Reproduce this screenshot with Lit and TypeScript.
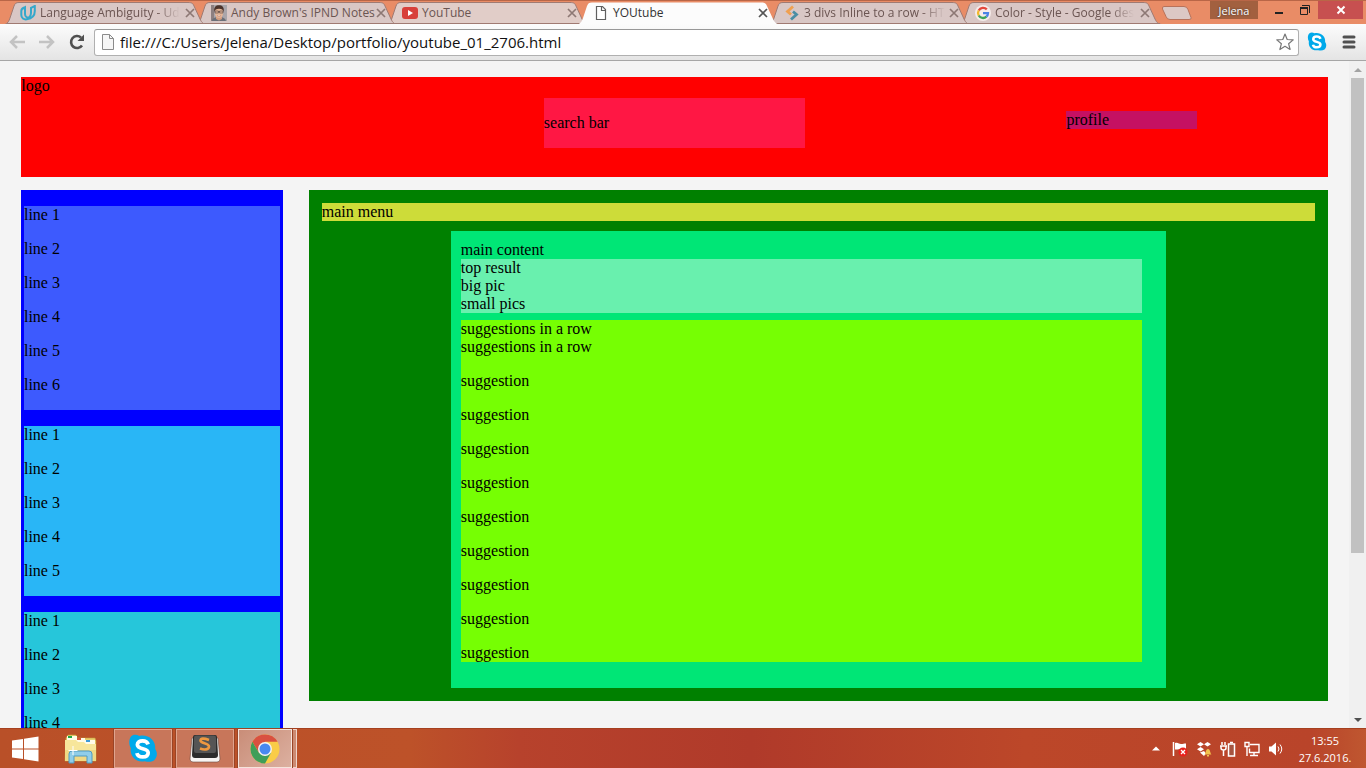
import { LitElement, html, css, svg } from "lit";
import { customElement, state } from "lit/decorators.js";
import { classMap } from "lit/directives/class-map.js";

interface Tab {
  title: string;
  icon: unknown;
  fade?: boolean;
}

const udacity = html`<svg viewBox="0 0 16 16"><path d="M1.500 4.500L5 2.300V9c0 3 2 4 4.500 3.300M5 2.300C2.500 3 1.300 4 1.300 6v4c0 3 2.500 4.800 5.500 4.300C11 13.700 14.800 11 14.800 6V1L11 2.800V8c0 2-.6 3.500-2 4.500" fill="none" stroke="#35a8cb" stroke-width="2"/></svg>`;

const portrait = html`<svg viewBox="0 0 16 16"><rect width="16" height="16" fill="#a9a5aa"/><rect width="3" height="16" fill="#8c7f80"/><path d="M1 16c0-3 3-4 7-4s6 1 7 4z" fill="#6b6f78"/><path d="M5 11h6v3l-3 1.500L5 14z" fill="#d09c80"/><ellipse cx="8" cy="7.500" rx="4.200" ry="5.500" fill="#e3b597"/><path d="M3.300 7C2.500 2 5 .3 8 .3S13.500 2 12.700 7C12 4.500 11 3.800 8 3.800S4 4.500 3.300 7z" fill="#4c332b"/><path d="M4 6h3.400v2H4zM8.600 6H12v2H8.600zM7.400 6.600h1.200" fill="none" stroke="#4a3b39" stroke-width=".6"/><path d="M6 10.500q2 1.500 4 0" fill="#fff" stroke="#a55a4c" stroke-width=".5"/></svg>`;

const youtube = html`<svg viewBox="0 0 16 16"><rect y="2" width="16" height="12" rx="3" fill="#d8403a"/><path d="M6 5l5 3-5 3z" fill="#fff"/></svg>`;

const page = html`<svg viewBox="0 0 16 16"><path d="M3.500 1.500h6l3 3v10h-9z" fill="#fff" stroke="#5f5f5f" stroke-width="1.200"/><path d="M8.500 1.500v4h4" fill="none" stroke="#5f5f5f" stroke-width="1.200"/></svg>`;

const codeMark = html`<svg viewBox="0 0 16 16"><path d="M9 1.500L3.500 6.500 7 9.500" fill="none" stroke="#f0a050" stroke-width="2.800"/><path d="M9 6.500l3.500 3L7 14.500" fill="none" stroke="#4a8ea4" stroke-width="2.800"/></svg>`;

const google = html`<svg viewBox="0 0 16 16"><circle cx="8" cy="8" r="8" fill="#f6ecea"/><g fill="none" stroke-width="2.300"><path d="M11.800 4.400A5 5 0 0 0 3.700 5.500" stroke="#e4483c"/><path d="M3.700 5.500a5 5 0 0 0 0 5" stroke="#f2b92c"/><path d="M3.700 10.500a5 5 0 0 0 7.700 1.200" stroke="#3da35a"/><path d="M11.400 11.700A5 5 0 0 0 13 8.200H8" stroke="#4b83e6"/></g></svg>`;

const skype = (size: number) => html`<svg width=${size} height=${size} viewBox="0 0 32 32"><path d="M3.500 2.500C6 .5 9 .5 12 2c9-2 18 4 17 14 3 4 2 9-1 12-3 2-7 2-10 1C9 31 1.500 24 3 15 .5 11 1 5 3.500 2.500z" fill="#00a9ea"/><path d="M21.500 11c-1-3-3.500-3.700-6-3.700-3 0-5.500 1.500-5.500 4.200 0 5.500 11.500 3 11.500 8.500 0 3-2.500 4.500-5.800 4.500-3 0-5.500-1-6.200-4.200" fill="none" stroke="#fff" stroke-width="4"/></svg>`;

@customElement("app-root")
export class AppRoot extends LitElement {
  @state() private active = 3;

  private tabs: Tab[] = [
    { title: "Language Ambiguity - Ud", icon: udacity, fade: true },
    { title: "Andy Brown's IPND Notes", icon: portrait },
    { title: "YouTube", icon: youtube },
    { title: "YOUtube", icon: page },
    { title: "3 divs Inline to a row - HT", icon: codeMark, fade: true },
    { title: "Color - Style - Google des", icon: google, fade: true },
  ];

  static styles = css`
    :host {
      display: flex;
      flex-direction: column;
      height: 100vh;
      overflow: hidden;
      font-family: "Open Sans", "Noto Sans", sans-serif;
      font-size: 12px;
      color: #000;
    }
    * {
      box-sizing: border-box;
    }
    button {
      border: 0;
      padding: 0;
      margin: 0;
      background: none;
      font: inherit;
      color: inherit;
      display: flex;
      align-items: center;
      justify-content: center;
    }
    svg {
      display: block;
    }

    .titlebar {
      flex: none;
      display: flex;
      height: 24px;
      padding-left: 5px;
      background: #e98c66;
      border-top: 1px solid #b96647;
    }
    .tabs {
      flex: 1;
      min-width: 0;
      display: flex;
      align-items: flex-end;
      isolation: isolate;
    }
    .tab {
      position: relative;
      flex: 0 1 202px;
      min-width: 0;
      height: 23px;
      margin-right: -11px;
      display: flex;
      align-items: center;
      padding: 0 11px 0 15px;
      color: #6b5552;
    }
    .shape {
      position: absolute;
      inset: 0;
      width: 100%;
      height: 100%;
      z-index: -1;
      fill: #d9c7c5;
      stroke: #a07a72;
    }
    .tab:nth-child(3) .shape {
      fill: #e1cdc8;
    }
    .tab.active .shape {
      fill: #fcfcfc;
      stroke: none;
    }
    .tab:nth-child(6) { z-index: 1; }
    .tab:nth-child(5) { z-index: 2; }
    .tab:nth-child(4) { z-index: 3; }
    .tab:nth-child(3) { z-index: 4; }
    .tab:nth-child(2) { z-index: 5; }
    .tab:nth-child(1) { z-index: 6; }
    .tab.tab.active {
      z-index: 10;
      color: #333;
    }
    .pick {
      flex: 1;
      min-width: 0;
      justify-content: flex-start;
      gap: 4px;
      height: 100%;
    }
    .favicon {
      flex: none;
      width: 16px;
      height: 16px;
    }
    .title {
      flex: none;
      white-space: nowrap;
      line-height: 18px;
    }
    .fade {
      mask-image: linear-gradient(to right, #000 calc(100% - 24px), transparent);
    }
    .close {
      flex: none;
      width: 12px;
      height: 16px;
      color: #8d7874;
    }
    .active .close {
      color: #555;
    }
    .newtab {
      flex: none;
      align-self: center;
      margin-left: 10px;
      width: 32px;
      height: 16px;
    }
    .window {
      flex: none;
      display: flex;
      align-items: flex-start;
      padding-right: 3px;
    }
    .user {
      width: 48px;
      height: 18px;
      margin-right: 8px;
      background: #a2603f;
      color: #fff;
      font-size: 11px;
      text-shadow: 0 0 2px #333;
    }
    .ctl {
      width: 26px;
      height: 18px;
    }
    .quit {
      width: 45px;
      background: #c75050;
    }

    .toolbar {
      flex: none;
      display: flex;
      align-items: center;
      gap: 8px;
      height: 37px;
      padding: 0 8px;
      background: linear-gradient(#fcfcfc, #e4e4e4);
      border-bottom: 1px solid #a6a6a6;
    }
    .nav {
      display: flex;
      gap: 12px;
    }
    .nav button {
      width: 18px;
      height: 18px;
    }
    .address {
      flex: 1;
      display: flex;
      align-items: center;
      gap: 4px;
      height: 27px;
      padding: 0 4px 0 5px;
      background: #fff;
      border: 1px solid #b0b0b0;
      border-top-color: #989898;
      border-radius: 3px;
    }
    .address input {
      flex: 1;
      min-width: 0;
      height: 24px;
      border: 0;
      padding: 0;
      outline: 0;
      background: none;
      font: 15px/24px "Open Sans", "Noto Sans", sans-serif;
      color: #111;
    }
    .more {
      width: 14px;
      margin: 0 2px 0 7px;
    }

    .viewport {
      flex: 1;
      min-height: 0;
      display: flex;
      background: #f4f4f4;
    }
    .site {
      flex: 1;
      min-width: 0;
      overflow: hidden;
      padding: 16px 8px 0;
      font: 16px/18px "Liberation Serif", "Times New Roman", serif;
    }
    .header {
      display: grid;
      grid-template-columns: 40% 20% 20% 10%;
      align-items: start;
      height: 100px;
      margin: 0 1%;
      background: #f00;
    }
    .search {
      margin-top: 21px;
      padding: 16px 0;
      background: #ff1744;
    }
    .profile {
      grid-column: 4;
      margin-top: 34px;
      background: #c51162;
    }
    .columns {
      display: grid;
      grid-template-columns: 20% 78%;
      justify-content: space-between;
      align-items: start;
      margin: 13px 1% 0;
    }
    .side {
      display: flex;
      flex-direction: column;
      gap: 16px;
      padding: 16px 1%;
      background: #00f;
    }
    .group p,
    .suggestions p {
      margin: 0;
    }
    .group p {
      padding-bottom: 16px;
    }
    .indigo { background: #3d5afe; }
    .sky { background: #29b6f6; }
    .teal { background: #26c6da; }
    .main {
      padding: 13px;
      background: #008000;
    }
    .menu {
      background: #cddc39;
    }
    .content {
      width: 72%;
      margin: 10px 0 0 13%;
      padding: 10px 10px 26px;
      background: #00e676;
    }
    .top,
    .suggestions {
      width: 98%;
    }
    .top {
      background: #69f0ae;
    }
    .suggestions {
      margin-top: 7px;
      background: #76ff03;
    }
    .suggestions p {
      padding-top: 16px;
    }

    .scroll {
      flex: none;
      display: flex;
      flex-direction: column;
      align-items: center;
      width: 17px;
      background: #f0f0f0;
    }
    .scroll button {
      flex: none;
      width: 17px;
      height: 17px;
    }
    .track {
      flex: 1;
      width: 13px;
    }
    .thumb {
      height: 75%;
      background: #c1c1c1;
    }

    .taskbar {
      flex: none;
      display: flex;
      align-items: stretch;
      height: 40px;
      background: linear-gradient(to right, #b95028, #bd5229 30%, #b7422c 38%, #b03a2a 55%, #bc4729 75%, #b9442a 96%, #bf5730);
      border-top: 1px solid #a5401f;
      color: #fff;
    }
    .start {
      width: 50px;
    }
    .files {
      width: 62px;
    }
    .apps {
      flex: 1;
      display: flex;
      gap: 4px;
      padding-left: 2px;
    }
    .app {
      width: 58px;
      background: #c8765a;
      border: 1px solid #e0a48e;
      outline: 1px solid #9a4426;
    }
    .app.current {
      width: 54px;
      background: linear-gradient(135deg, #c98d78, #dcb0a0);
      border-color: #f5e4dd;
    }
    .stack {
      width: 4px;
      margin-left: -3px;
      background: #cc8a72;
      border: 1px solid #f0d4ca;
      border-left: 0;
    }
    .tray {
      display: flex;
      align-items: center;
      gap: 8px;
    }
    .tray button {
      width: 16px;
      height: 16px;
    }
    .clock {
      display: flex;
      flex-direction: column;
      justify-content: center;
      width: 82px;
      text-align: center;
      font-size: 11px;
      line-height: 17px;
    }
  `;

  private renderTab(tab: Tab, i: number) {
    const on = i === this.active;
    return html`<div class=${classMap({ tab: true, active: on })}>
      <svg class="shape" viewBox="0 0 202 23" preserveAspectRatio="none">
        <path d="M0 23.500C3 22 4 20 5 17L9 5C10 2.500 11 1.500 14 1.500H183C187 1.500 188 2.500 189 5L195 18C197 22 198 23 202 23.500" />
        ${on ? null : svg`<path d="M2 22.500H200" />`}
      </svg>
      <button class="pick" @click=${() => (this.active = i)}>
        <span class="favicon">${tab.icon}</span>
        <span class=${classMap({ title: true, fade: !!tab.fade })}>${tab.title}</span>
      </button>
      <button class="close" aria-label="Close tab">
        <svg width="10" height="10" viewBox="0 0 10 10"><path d="M1 1l8 8M9 1l-8 8" stroke="currentColor" stroke-width="1.700" /></svg>
      </button>
    </div>`;
  }

  private lines(count: number, word: string) {
    return Array.from({ length: count }, (_, i) => html`<p>${word} ${i + 1}</p>`);
  }

  render() {
    return html`
      <div class="titlebar">
        <div class="tabs">
          ${this.tabs.map((t, i) => this.renderTab(t, i))}
          <button class="newtab" aria-label="New tab">
            <svg width="32" height="16" viewBox="0 0 32 16"><path d="M3 1.500H23q3 0 4 3l3 8q1 2-2 2H9q-3 0-4-3L1.500 4Q1 1.500 3 1.500z" fill="#dcc8c4" stroke="#b8725a" /></svg>
          </button>
        </div>
        <div class="window">
          <button class="user">Jelena</button>
          <button class="ctl" aria-label="Minimize"><svg width="10" height="12" viewBox="0 0 10 12"><path d="M1 9h8" stroke="#222" stroke-width="2" /></svg></button>
          <button class="ctl" aria-label="Restore"><svg width="12" height="12" viewBox="0 0 12 12"><path d="M3 1.500h7.500V9M1.500 3v7.500h7V3.500h-7" fill="none" stroke="#222" /><path d="M1 4h8" stroke="#222" stroke-width="2" /></svg></button>
          <button class="ctl quit" aria-label="Close"><svg width="10" height="10" viewBox="0 0 10 10"><path d="M1.500 1.500l7 7M8.500 1.500l-7 7" stroke="#fff" stroke-width="2" /></svg></button>
        </div>
      </div>

      <div class="toolbar">
        <div class="nav">
          <button aria-label="Back"><svg width="18" height="18" viewBox="0 0 18 18"><path d="M17 9H3M9 3L3 9l6 6" fill="none" stroke="#c3c3c3" stroke-width="2.500" /></svg></button>
          <button aria-label="Forward"><svg width="18" height="18" viewBox="0 0 18 18"><path d="M1 9h14M9 3l6 6-6 6" fill="none" stroke="#c3c3c3" stroke-width="2.500" /></svg></button>
          <button aria-label="Reload"><svg width="18" height="18" viewBox="0 0 18 18"><path d="M14 12.500A6 6 0 1 1 13 4.500" fill="none" stroke="#505050" stroke-width="2.600" /><path d="M16 1.500V8H9.500z" fill="#505050" /></svg></button>
        </div>
        <div class="address">
          <svg width="16" height="18" viewBox="0 0 16 18"><path d="M2.500 1.500h7l4 4v11h-11z" fill="#f6f6f6" stroke="#8b8b8b" /><path d="M9.500 1.500v4h4" fill="none" stroke="#8b8b8b" /></svg>
          <input aria-label="Address" value="file:///C:/Users/Jelena/Desktop/portfolio/youtube_01_2706.html" />
          <button aria-label="Bookmark this page"><svg width="18" height="18" viewBox="0 0 18 18"><path d="M9 1l2.200 5.500 6 .4-4.600 3.800 1.500 5.800L9 13.300l-5.100 3.200 1.500-5.800L.8 6.900l6-.4z" fill="#fff" stroke="#777" stroke-width="1.200" stroke-linejoin="round" /></svg></button>
        </div>
        <button aria-label="Skype">${skype(20)}</button>
        <button class="more" aria-label="Menu"><svg width="14" height="14" viewBox="0 0 14 14"><path d="M2 2h10M2 7h10M2 12h10" stroke="#505050" stroke-width="3" stroke-linecap="round" /></svg></button>
      </div>

      <div class="viewport">
        <div class="site">
          <header class="header">
            <div>logo</div>
            <div class="search">search bar</div>
            <div class="profile">profile</div>
          </header>
          <div class="columns">
            <aside class="side">
              <div class="group indigo">${this.lines(6, "line")}</div>
              <div class="group sky">${this.lines(5, "line")}</div>
              <div class="group teal">${this.lines(4, "line")}</div>
            </aside>
            <main class="main">
              <div class="menu">main menu</div>
              <div class="content">
                <div>main content</div>
                <div class="top">
                  <div>top result</div>
                  <div>big pic</div>
                  <div>small pics</div>
                </div>
                <div class="suggestions">
                  <div>suggestions in a row</div>
                  <div>suggestions in a row</div>
                  ${Array.from({ length: 9 }, () => html`<p>suggestion</p>`)}
                </div>
              </div>
            </main>
          </div>
        </div>
        <div class="scroll">
          <button aria-label="Scroll up"><svg width="8" height="4" viewBox="0 0 8 4"><path d="M0 4l4-4 4 4z" fill="#a3a3a3" /></svg></button>
          <div class="track"><div class="thumb"></div></div>
          <button aria-label="Scroll down"><svg width="8" height="4" viewBox="0 0 8 4"><path d="M0 0l4 4 4-4z" fill="#505050" /></svg></button>
        </div>
      </div>

      <footer class="taskbar">
        <button class="start" aria-label="Start"><svg width="28" height="26" viewBox="0 0 28 26"><path d="M1 4.500L12 3v9.500H1zM13 2.800L27.500.5v12H13zM1 13.500h11V23L1 21.500zM13 13.500h14.500v12L13 23.200z" fill="#fff" /></svg></button>
        <button class="files" aria-label="File Explorer"><svg width="34" height="30" viewBox="0 0 34 30">
          <path d="M2 4l2-3h8l1 3h18l1 3v20H1z" fill="#e8cf6e" stroke="#c29e3e" stroke-width=".6" />
          <path d="M3 2h10v4H3zM11 4h10v4H11zM19 6h12v4H19z" fill="#fffbe8" />
          <path d="M4 2h4v2H4z" fill="#22a646" /><path d="M13 4h4v2h-4z" fill="#d7533a" /><path d="M22 6h4v2h-4z" fill="#3b9ad8" />
          <path d="M1 6h11l2 2h6l2 2h10v17H1z" fill="#f7e69b" /><path d="M1 16h31v11H1z" fill="#edd27a" opacity=".7" />
          <path d="M5 29V20q0-3 3-3h17q3 0 3 3v9h-5v-7H10v7z" fill="#90cde9" stroke="#4f9ac1" />
          <path d="M9 12v9M4.500 16.500h9" stroke="#fff" />
        </svg></button>
        <div class="apps">
          <button class="app" aria-label="Skype">${skype(30)}</button>
          <button class="app" aria-label="Sublime Text"><svg width="32" height="30" viewBox="0 0 32 30">
            <path d="M3 4L1 25q0 3 3 3h24q3 0 3-3L29 4z" fill="#f7f5f3" stroke="#6b4a40" stroke-width=".6" />
            <path d="M6 1h20q2 0 2 2l1 18q0 3-3 3H6q-3 0-3-3L4 3q0-2 2-2z" fill="#2c2c2c" />
            <path d="M7 1.500h18q2 0 2 2V17q0 2-2 2H7q-2 0-2-2V3.500q0-2 2-2z" fill="#555" />
            <path d="M20 6q-8-3-8.500.5c0 3 8.500 2.500 8.500 6 0 3.500-5 3.500-9 2" fill="none" stroke="#ee9840" stroke-width="2.600" />
          </svg></button>
          <button class="app current" aria-label="Google Chrome"><svg width="30" height="30" viewBox="0 0 30 30">
            <circle cx="15" cy="15" r="14.500" fill="#f9cc47" />
            <path d="M2.400 7.800A14.500 14.500 0 0 1 27.600 7.800H15L8.800 18.600z" fill="#d95040" />
            <path d="M2.400 7.800A14.500 14.500 0 0 0 15 29.500L21.200 18.600 15 22 8.800 18.600z" fill="#3f9e58" />
            <circle cx="15" cy="15" r="7" fill="#f4f1ef" /><circle cx="15" cy="15" r="5.500" fill="#4888ef" />
          </svg></button>
          <span class="stack"></span>
        </div>
        <div class="tray">
          <button aria-label="Show hidden icons"><svg width="8" height="5" viewBox="0 0 8 5"><path d="M0 4.500l4-4 4 4z" fill="#fff" /></svg></button>
          <button aria-label="Action Center"><svg width="16" height="16" viewBox="0 0 16 16"><path d="M1.500 1v14" stroke="#fff" stroke-width="1.500" /><path d="M3 2c3-1 4 1 6 1s3-.5 5-.5v6c-3 1-4-1-6-.5s-3 .5-5 .5z" fill="#fff" /><circle cx="11" cy="11" r="4.500" fill="#e8221c" /><path d="M9 9l4 4M13 9l-4 4" stroke="#fff" stroke-width="1.300" /></svg></button>
          <button aria-label="Dropbox"><svg width="16" height="16" viewBox="0 0 16 16"><path d="M4.500 1L8 3.300 4.500 5.600 1 3.300zM11.500 1L15 3.300l-3.500 2.300L8 3.300zM4.500 6L8 8.300l-3.500 2.300L1 8.300zM4 11.500L8 10l2 2.500L8 15z" fill="#fff" /><path d="M8.500 13.500c1.500-1 1-5.500 3.500-5.500s2 4.500 3.500 5.500zM11 14h2v1.500h-2z" fill="#f2c34c" /></svg></button>
          <button aria-label="Battery"><svg width="16" height="16" viewBox="0 0 16 16"><path d="M2 1v3M5 1v3M0 5h7M1 5v2q0 2 2.500 2T6 7V5M3.500 9v6" fill="none" stroke="#fff" stroke-width="1.500" /><path d="M8.500 3h6v12h-6z" fill="#a55440" stroke="#fff" stroke-width="1.500" /><path d="M10 1.500h3" stroke="#fff" stroke-width="1.500" /></svg></button>
          <button aria-label="Network"><svg width="16" height="16" viewBox="0 0 16 16"><path d="M6 3.500h9v8H5.500v-4M10 12v2.500M6 14.500h8M1 1.500h4v4H1zM3 6v9" fill="none" stroke="#fff" stroke-width="1.400" /></svg></button>
          <button aria-label="Volume"><svg width="16" height="16" viewBox="0 0 16 16"><path d="M1 5.500h2.500L8 1.500v13l-4.500-4H1z" fill="#fff" /><path d="M10 5.500q2 2.500 0 5M12 3.500q3.500 4.500 0 9" fill="none" stroke="#fff" /></svg></button>
        </div>
        <div class="clock"><span>13:55</span><span>27.6.2016.</span></div>
      </footer>
    `;
  }
}
